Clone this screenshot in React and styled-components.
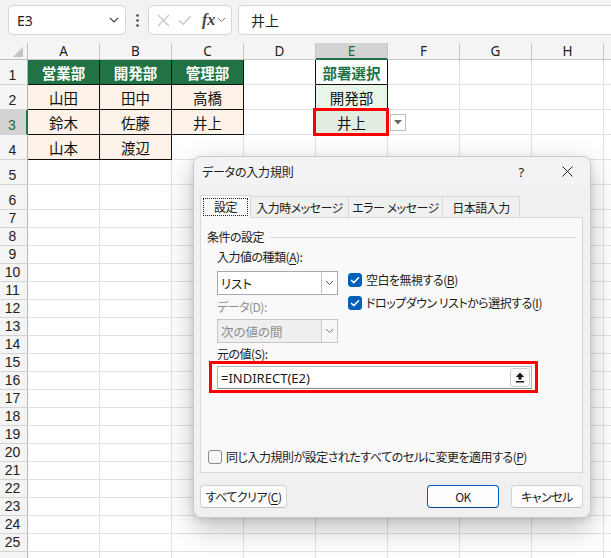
import React from 'react';
import styled, { createGlobalStyle, css } from 'styled-components';

const Global = createGlobalStyle`
  html, body { margin: 0; padding: 0; }
  body {
    width: 611px; height: 558px; overflow: hidden; background: #fff;
    font-family: "Noto Sans CJK JP", "Noto Sans", sans-serif;
  }
`;

const Page = styled.div`
  position: relative;
  width: 611px;
  height: 558px;
  overflow: hidden;
  display: flex;
  flex-direction: column;
`;

/* ---------- formula bar ---------- */
const Toolbar = styled.div`
  height: 43px;
  flex: none;
  box-sizing: border-box;
  background: #f3f3f3;
  display: flex;
  align-items: flex-start;
  padding: 5px 0 0 8px;
`;

const Box = styled.div`
  height: 30px;
  box-sizing: border-box;
  background: #fff;
  border: 1px solid #d6d6d6;
  border-radius: 5px;
  display: flex;
  align-items: center;
`;

const NameBox = styled(Box)`
  width: 118px;
  padding: 0 6px 0 8px;
  justify-content: space-between;
  font-family: "Noto Sans", sans-serif;
  font-size: 14px;
  color: #222;
`;

const Dots = styled.div`
  width: 22px;
  height: 30px;
  display: flex;
  align-items: center;
  justify-content: center;
`;

const FxBox = styled(Box)`
  width: 84px;
  padding: 0 4px 0 8px;
  gap: 8px;
`;

const Fx = styled.span`
  font-family: "Liberation Serif", serif;
  font-style: italic;
  font-weight: bold;
  font-size: 16px;
  color: #444;
  margin-left: 2px;
  margin-right: -6px;
`;

const FormulaInput = styled(Box)`
  flex: 1;
  margin-left: 6px;
  border-right: none;
  border-radius: 5px 0 0 5px;
  padding-left: 12px;
  font-size: 14px;
  color: #222;
`;

/* ---------- sheet ---------- */
const Sheet = styled.div`
  flex: 1;
  overflow: hidden;
  display: grid;
  grid-template-columns: 28px repeat(9, 72px);
  grid-template-rows: 17px repeat(6, 25px) repeat(20, 18px);
`;

const Corner = styled.div`
  background: #f5f5f5;
  border-right: 1px solid #bfbfbf;
  border-bottom: 1px solid #bfbfbf;
  box-sizing: border-box;
  display: flex;
  align-items: flex-end;
  justify-content: flex-end;
  padding: 0 4px 2px 0;
`;

const ColHead = styled.div`
  box-sizing: border-box;
  background: ${p => (p.$sel ? '#d3d3d3' : '#f5f5f5')};
  color: ${p => (p.$sel ? '#1e6b3c' : '#222')};
  border-right: 1px solid #c6c6c6;
  border-bottom: ${p => (p.$sel ? '2px solid #217346' : '1px solid #c6c6c6')};
  font-family: "Noto Sans", sans-serif;
  font-size: 13.5px;
  line-height: 16px;
  text-align: center;
`;

const RowHead = styled.div`
  box-sizing: border-box;
  background: ${p => (p.$sel ? '#d3d3d3' : '#f5f5f5')};
  color: ${p => (p.$sel ? '#1e6b3c' : '#222')};
  border-right: ${p => (p.$sel ? '2px solid #217346' : '1px solid #b4b4b4')};
  border-bottom: 1px solid #d4d4d4;
  font-family: "Liberation Sans", sans-serif;
  font-size: 14px;
  line-height: 15px;
  display: flex;
  align-items: flex-end;
  justify-content: center;
  padding-bottom: 1px;
  padding-right: 2px;
`;

const variants = {
  head: css`background: #217346; color: #fff; font-weight: bold;`,
  peach: css`background: #fdf2e7; color: #111;`,
  title: css`background: #fff; color: #217346; font-weight: bold;`,
  mint: css`background: #e9f5e9; color: #111;`,
  mintSel: css`background: #e3eee3; color: #111;`,
  none: css`background: #fff;`,
};

const Cell = styled.div`
  position: relative;
  box-sizing: border-box;
  border-right: 1px solid ${p => (p.$rb ? '#111' : '#e1e1e1')};
  border-bottom: 1px solid ${p => (p.$bb ? '#111' : '#e1e1e1')};
  font-family: "Noto Sans CJK JP", sans-serif;
  font-size: 14.5px;
  display: flex;
  align-items: center;
  justify-content: center;
  padding-top: 1px;
  ${p => variants[p.$v || 'none']}
`;

const SelectionMark = styled.div`
  position: absolute;
  left: -3px;
  top: -2px;
  right: -2px;
  bottom: -2px;
  border: 3px solid #f00;
  z-index: 3;
  pointer-events: none;
`;

const CellDrop = styled.div`
  position: absolute;
  left: 74px;
  top: 4px;
  width: 16px;
  height: 17px;
  box-sizing: border-box;
  background: #fff;
  border: 1px solid #bdbdbd;
  z-index: 3;
  display: flex;
  align-items: center;
  justify-content: center;
`;

/* ---------- dialog ---------- */
const Dialog = styled.div`
  position: absolute;
  left: 193px;
  top: 156px;
  width: 398px;
  height: 362px;
  box-sizing: border-box;
  background: #f0f0f0;
  border: 1px solid #c9c9c9;
  border-radius: 8px;
  box-shadow: 0 10px 28px rgba(0, 0, 0, 0.26), 0 2px 6px rgba(0, 0, 0, 0.1);
  display: flex;
  flex-direction: column;
  overflow: hidden;
  font-family: "Noto Sans CJK JP", sans-serif;
  font-size: 12px;
  font-feature-settings: "palt";
  letter-spacing: -0.5px;
  color: #1b1b1b;
  z-index: 10;
`;

const TitleBar = styled.div`
  height: 29px;
  flex: none;
  background: #f3f3f5;
  display: flex;
  align-items: center;
  padding-left: 8px;
`;

const Title = styled.div`
  flex: 1;
  font-size: 12px;
  letter-spacing: -0.2px;
`;

const TitleBtn = styled.div`
  width: ${p => p.$w}px;
  height: 29px;
  display: flex;
  align-items: center;
  justify-content: center;
  font-family: "Noto Sans", sans-serif;
  font-size: 13px;
`;

const Body = styled.div`
  flex: 1;
  display: flex;
  flex-direction: column;
  padding: 10px 7px 8px 6px;
`;

const Tabs = styled.div`
  display: flex;
  align-items: flex-end;
  height: 22px;
  margin-bottom: -1px;
  position: relative;
  z-index: 1;
`;

const Tab = styled.div`
  box-sizing: border-box;
  width: ${p => p.$w}px;
  height: ${p => (p.$active ? 23 : 22)}px;
  border: 1px solid #d9d9d9;
  border-bottom: ${p => (p.$active ? '1px solid #f9f9f9' : '1px solid #d9d9d9')};
  background: ${p => (p.$active ? '#f9f9f9' : '#f0f0f0')};
  margin-left: ${p => (p.$first ? 0 : -1)}px;
  display: flex;
  align-items: center;
  justify-content: center;
  font-size: 12px;
`;

const Focus = styled.span`
  border: 1px dotted #222;
  padding: 0 10px;
  line-height: 16px;
`;

const Panel = styled.div`
  height: 256px;
  box-sizing: border-box;
  background: #f9f9f9;
  border: 1px solid #d9d9d9;
  display: flex;
  flex-direction: column;
  padding: 11px 6px 8px 6px;
`;

const GroupHead = styled.div`
  display: flex;
  align-items: center;
  gap: 6px;
  height: 16px;
  line-height: 16px;
  &::after {
    content: "";
    flex: 1;
    height: 1px;
    background: #dcdcdc;
  }
`;

const Indent = styled.div`
  margin-left: 10px;
  display: flex;
  flex-direction: column;
`;

const Label = styled.div`
  height: ${p => p.$h || 16}px;
  line-height: ${p => p.$h || 16}px;
  margin-top: ${p => p.$mt || 0}px;
  color: ${p => (p.$disabled ? '#8f8f8f' : '#1b1b1b')};
`;

const U = styled.span`
  text-decoration: underline;
  text-underline-offset: 2px;
`;

const Fields = styled.div`
  display: flex;
  gap: 10px;
  margin-top: 6px;
`;

const LeftCol = styled.div`
  width: 121px;
  display: flex;
  flex-direction: column;
`;

const RightCol = styled.div`
  display: flex;
  flex-direction: column;
  gap: 9px;
  padding-top: 2px;
`;

const Select = styled.div`
  height: 24px;
  box-sizing: border-box;
  display: flex;
  border: 1px solid ${p => (p.$disabled ? '#c6c6c6' : '#a9a9a9')};
  background: ${p => (p.$disabled ? '#efefef' : '#fff')};
  color: ${p => (p.$disabled ? '#8d8d8d' : '#1b1b1b')};
  margin-top: ${p => p.$mt || 0}px;
`;

const SelectText = styled.div`
  flex: 1;
  padding-left: 3px;
  display: flex;
  align-items: center;
  font-size: 12.5px;
  letter-spacing: 0;
`;

const SelectArrow = styled.div`
  width: 15px;
  border-left: 1px solid ${p => (p.$disabled ? '#cdcdcd' : '#c4c4c4')};
  background: ${p => (p.$disabled ? '#f7f7f7' : '#fff')};
  display: flex;
  align-items: center;
  justify-content: center;
`;

const CheckRow = styled.div`
  display: flex;
  align-items: center;
  gap: 4px;
  height: 14px;
  line-height: 14px;
  margin-left: ${p => p.$ml || 0}px;
`;

const CheckBox = styled.div`
  width: 14px;
  height: 14px;
  box-sizing: border-box;
  border-radius: 3px;
  flex: none;
  display: flex;
  align-items: center;
  justify-content: center;
  ${p =>
    p.$on
      ? css`background: #005fb8; border: 1px solid #005fb8;`
      : css`background: #f7f7f7; border: 1px solid #8a8a8a;`}
`;

const Highlight = styled.div`
  margin-left: -8px;
  margin-top: -1px;
  width: 329px;
  height: 32px;
  box-sizing: border-box;
  border: 3px solid #f00;
  padding: 2px 3px 1px 5px;
`;

const InputBox = styled.div`
  height: 23px;
  box-sizing: border-box;
  border: 1px solid #b4b4b4;
  border-bottom-color: #8c8c8c;
  background: #fff;
  display: flex;
  align-items: center;
  padding-left: 3px;
`;

const InputText = styled.div`
  flex: 1;
  font-family: "Noto Sans", sans-serif;
  font-size: 13px;
  letter-spacing: 0;
  font-feature-settings: normal;
`;

const MiniBtn = styled.div`
  width: 20px;
  height: 19px;
  box-sizing: border-box;
  border: 1px solid #cfcfcf;
  border-radius: 3px;
  background: #fdfdfd;
  margin-right: 1px;
  display: flex;
  align-items: center;
  justify-content: center;
`;

const Spacer = styled.div`flex: 1;`;

const Buttons = styled.div`
  display: flex;
  align-items: center;
  margin-top: 12px;
  gap: 12px;
`;

const Button = styled.div`
  width: ${p => p.$w}px;
  height: 23px;
  box-sizing: border-box;
  border: 1px solid ${p => (p.$primary ? '#005fb8' : '#d2d2d2')};
  border-bottom-color: ${p => (p.$primary ? '#004a94' : '#c0c0c0')};
  border-radius: 4px;
  background: #fdfdfd;
  display: flex;
  align-items: center;
  justify-content: center;
  font-size: 12px;
`;

/* ---------- icons ---------- */
const Chevron = ({ color = '#555', size = 10 }) => (
  <svg width={size} height={size * 0.6} viewBox="0 0 10 6">
    <path d="M1 1 L5 5 L9 1" fill="none" stroke={color} strokeWidth="1.1" />
  </svg>
);

const Check = () => (
  <svg width="10" height="8" viewBox="0 0 10 8">
    <path d="M1 4 L3.8 6.6 L9 1.2" fill="none" stroke="#fff" strokeWidth="1.5" />
  </svg>
);

/* ---------- data ---------- */
const cols = ['A', 'B', 'C', 'D', 'E', 'F', 'G', 'H', ''];
const rowCount = 26;

const data = {
  'A1': ['営業部', 'head'], 'B1': ['開発部', 'head'], 'C1': ['管理部', 'head'],
  'A2': ['山田', 'peach'], 'B2': ['田中', 'peach'], 'C2': ['高橋', 'peach'],
  'A3': ['鈴木', 'peach'], 'B3': ['佐藤', 'peach'], 'C3': ['井上', 'peach'],
  'A4': ['山本', 'peach'], 'B4': ['渡辺', 'peach'],
  'E1': ['部署選択', 'title'], 'E2': ['開発部', 'mint'], 'E3': ['井上', 'mintSel'],
};
const rightBlack = new Set(['A1', 'B1', 'C1', 'A2', 'B2', 'C2', 'A3', 'B3', 'C3', 'A4', 'B4', 'D1', 'D2', 'D3', 'E1', 'E2', 'E3']);
const bottomBlack = new Set(['A1', 'B1', 'C1', 'A2', 'B2', 'C2', 'A3', 'B3', 'C3', 'A4', 'B4', 'E1', 'E2']);

function SheetGrid() {
  const items = [];
  items.push(
    <Corner key="corner">
      <svg width="10" height="10" viewBox="0 0 10 10">
        <path d="M10 0 L10 10 L0 10 Z" fill="#c4c4c4" />
      </svg>
    </Corner>
  );
  cols.forEach((c, i) => items.push(<ColHead key={'h' + i} $sel={c === 'E'}>{c}</ColHead>));
  for (let r = 1; r <= rowCount; r++) {
    items.push(<RowHead key={'r' + r} $sel={r === 3}>{r < rowCount ? r : ''}</RowHead>);
    cols.forEach((c, i) => {
      const id = c + r;
      const d = c ? data[id] : null;
      items.push(
        <Cell key={'c' + r + '-' + i} $v={d ? d[1] : 'none'} $rb={rightBlack.has(id)} $bb={bottomBlack.has(id)}>
          {d ? d[0] : null}
          {id === 'E3' && (
            <>
              <SelectionMark />
              <CellDrop>
                <svg width="8" height="5" viewBox="0 0 8 5">
                  <path d="M0 0 L8 0 L4 4.5 Z" fill="#6a6a6a" />
                </svg>
              </CellDrop>
            </>
          )}
        </Cell>
      );
    });
  }
  return <Sheet>{items}</Sheet>;
}

export default function App() {
  return (
    <Page>
      <Global />
      <Toolbar>
        <NameBox>
          <span>E3</span>
          <Chevron color="#444" />
        </NameBox>
        <Dots>
          <svg width="3" height="13" viewBox="0 0 3 13">
            <circle cx="1.5" cy="1.5" r="1.3" fill="#444" />
            <circle cx="1.5" cy="6.5" r="1.3" fill="#444" />
            <circle cx="1.5" cy="11.5" r="1.3" fill="#444" />
          </svg>
        </Dots>
        <FxBox>
          <svg width="13" height="13" viewBox="0 0 13 13">
            <path d="M1 1 L12 12 M12 1 L1 12" stroke="#c3c3c3" strokeWidth="1.2" />
          </svg>
          <svg width="14" height="11" viewBox="0 0 14 11">
            <path d="M1 5.5 L5 9.5 L13 1" fill="none" stroke="#c3c3c3" strokeWidth="1.2" />
          </svg>
          <Fx>fx</Fx>
          <Chevron color="#777" size={9} />
        </FxBox>
        <FormulaInput>井上</FormulaInput>
      </Toolbar>

      <SheetGrid />

      <Dialog>
        <TitleBar>
          <Title>データの入力規則</Title>
          <TitleBtn $w={46}>?</TitleBtn>
          <TitleBtn $w={46}>
            <svg width="11" height="11" viewBox="0 0 11 11">
              <path d="M0.5 0.5 L10.5 10.5 M10.5 0.5 L0.5 10.5" stroke="#222" strokeWidth="1" />
            </svg>
          </TitleBtn>
        </TitleBar>
        <Body>
          <Tabs>
            <Tab $w={51} $active $first><Focus>設定</Focus></Tab>
            <Tab $w={99}>入力時メッセージ</Tab>
            <Tab $w={95}>エラー メッセージ</Tab>
            <Tab $w={78}>日本語入力</Tab>
          </Tabs>
          <Panel>
            <GroupHead>条件の設定</GroupHead>
            <Indent>
              <Label $mt={4}>入力値の種類(<U>A</U>):</Label>
              <Fields>
                <LeftCol>
                  <Select>
                    <SelectText>リスト</SelectText>
                    <SelectArrow><Chevron color="#555" size={9} /></SelectArrow>
                  </Select>
                  <Label $mt={4} $disabled>データ(D):</Label>
                  <Select $mt={4} $disabled>
                    <SelectText>次の値の間</SelectText>
                    <SelectArrow $disabled><Chevron color="#777" size={9} /></SelectArrow>
                  </Select>
                </LeftCol>
                <RightCol>
                  <CheckRow>
                    <CheckBox $on><Check /></CheckBox>
                    <span>空白を無視する(<U>B</U>)</span>
                  </CheckRow>
                  <CheckRow>
                    <CheckBox $on><Check /></CheckBox>
                    <span>ドロップダウン リストから選択する(<U>I</U>)</span>
                  </CheckRow>
                </RightCol>
              </Fields>
              <Label $mt={3} $h={16}>元の値(S):</Label>
              <Highlight>
                <InputBox>
                  <InputText>=INDIRECT(E2)</InputText>
                  <MiniBtn>
                    <svg width="10" height="11" viewBox="0 0 10 11">
                      <path d="M5 0.5 L9.2 5 H6.6 V7.6 H3.4 V5 H0.8 Z" fill="#1b1b1b" />
                      <rect x="0.8" y="9" width="8.4" height="1.5" fill="#1b1b1b" />
                    </svg>
                  </MiniBtn>
                </InputBox>
              </Highlight>
            </Indent>
            <Spacer />
            <CheckRow $ml={1}>
              <CheckBox />
              <span>同じ入力規則が設定されたすべてのセルに変更を適用する(<U>P</U>)</span>
            </CheckRow>
          </Panel>
          <Buttons>
            <Button $w={87}>すべてクリア(<U>C</U>)</Button>
            <Spacer />
            <Button $w={72} $primary>OK</Button>
            <Button $w={72}>キャンセル</Button>
          </Buttons>
        </Body>
      </Dialog>
    </Page>
  );
}
